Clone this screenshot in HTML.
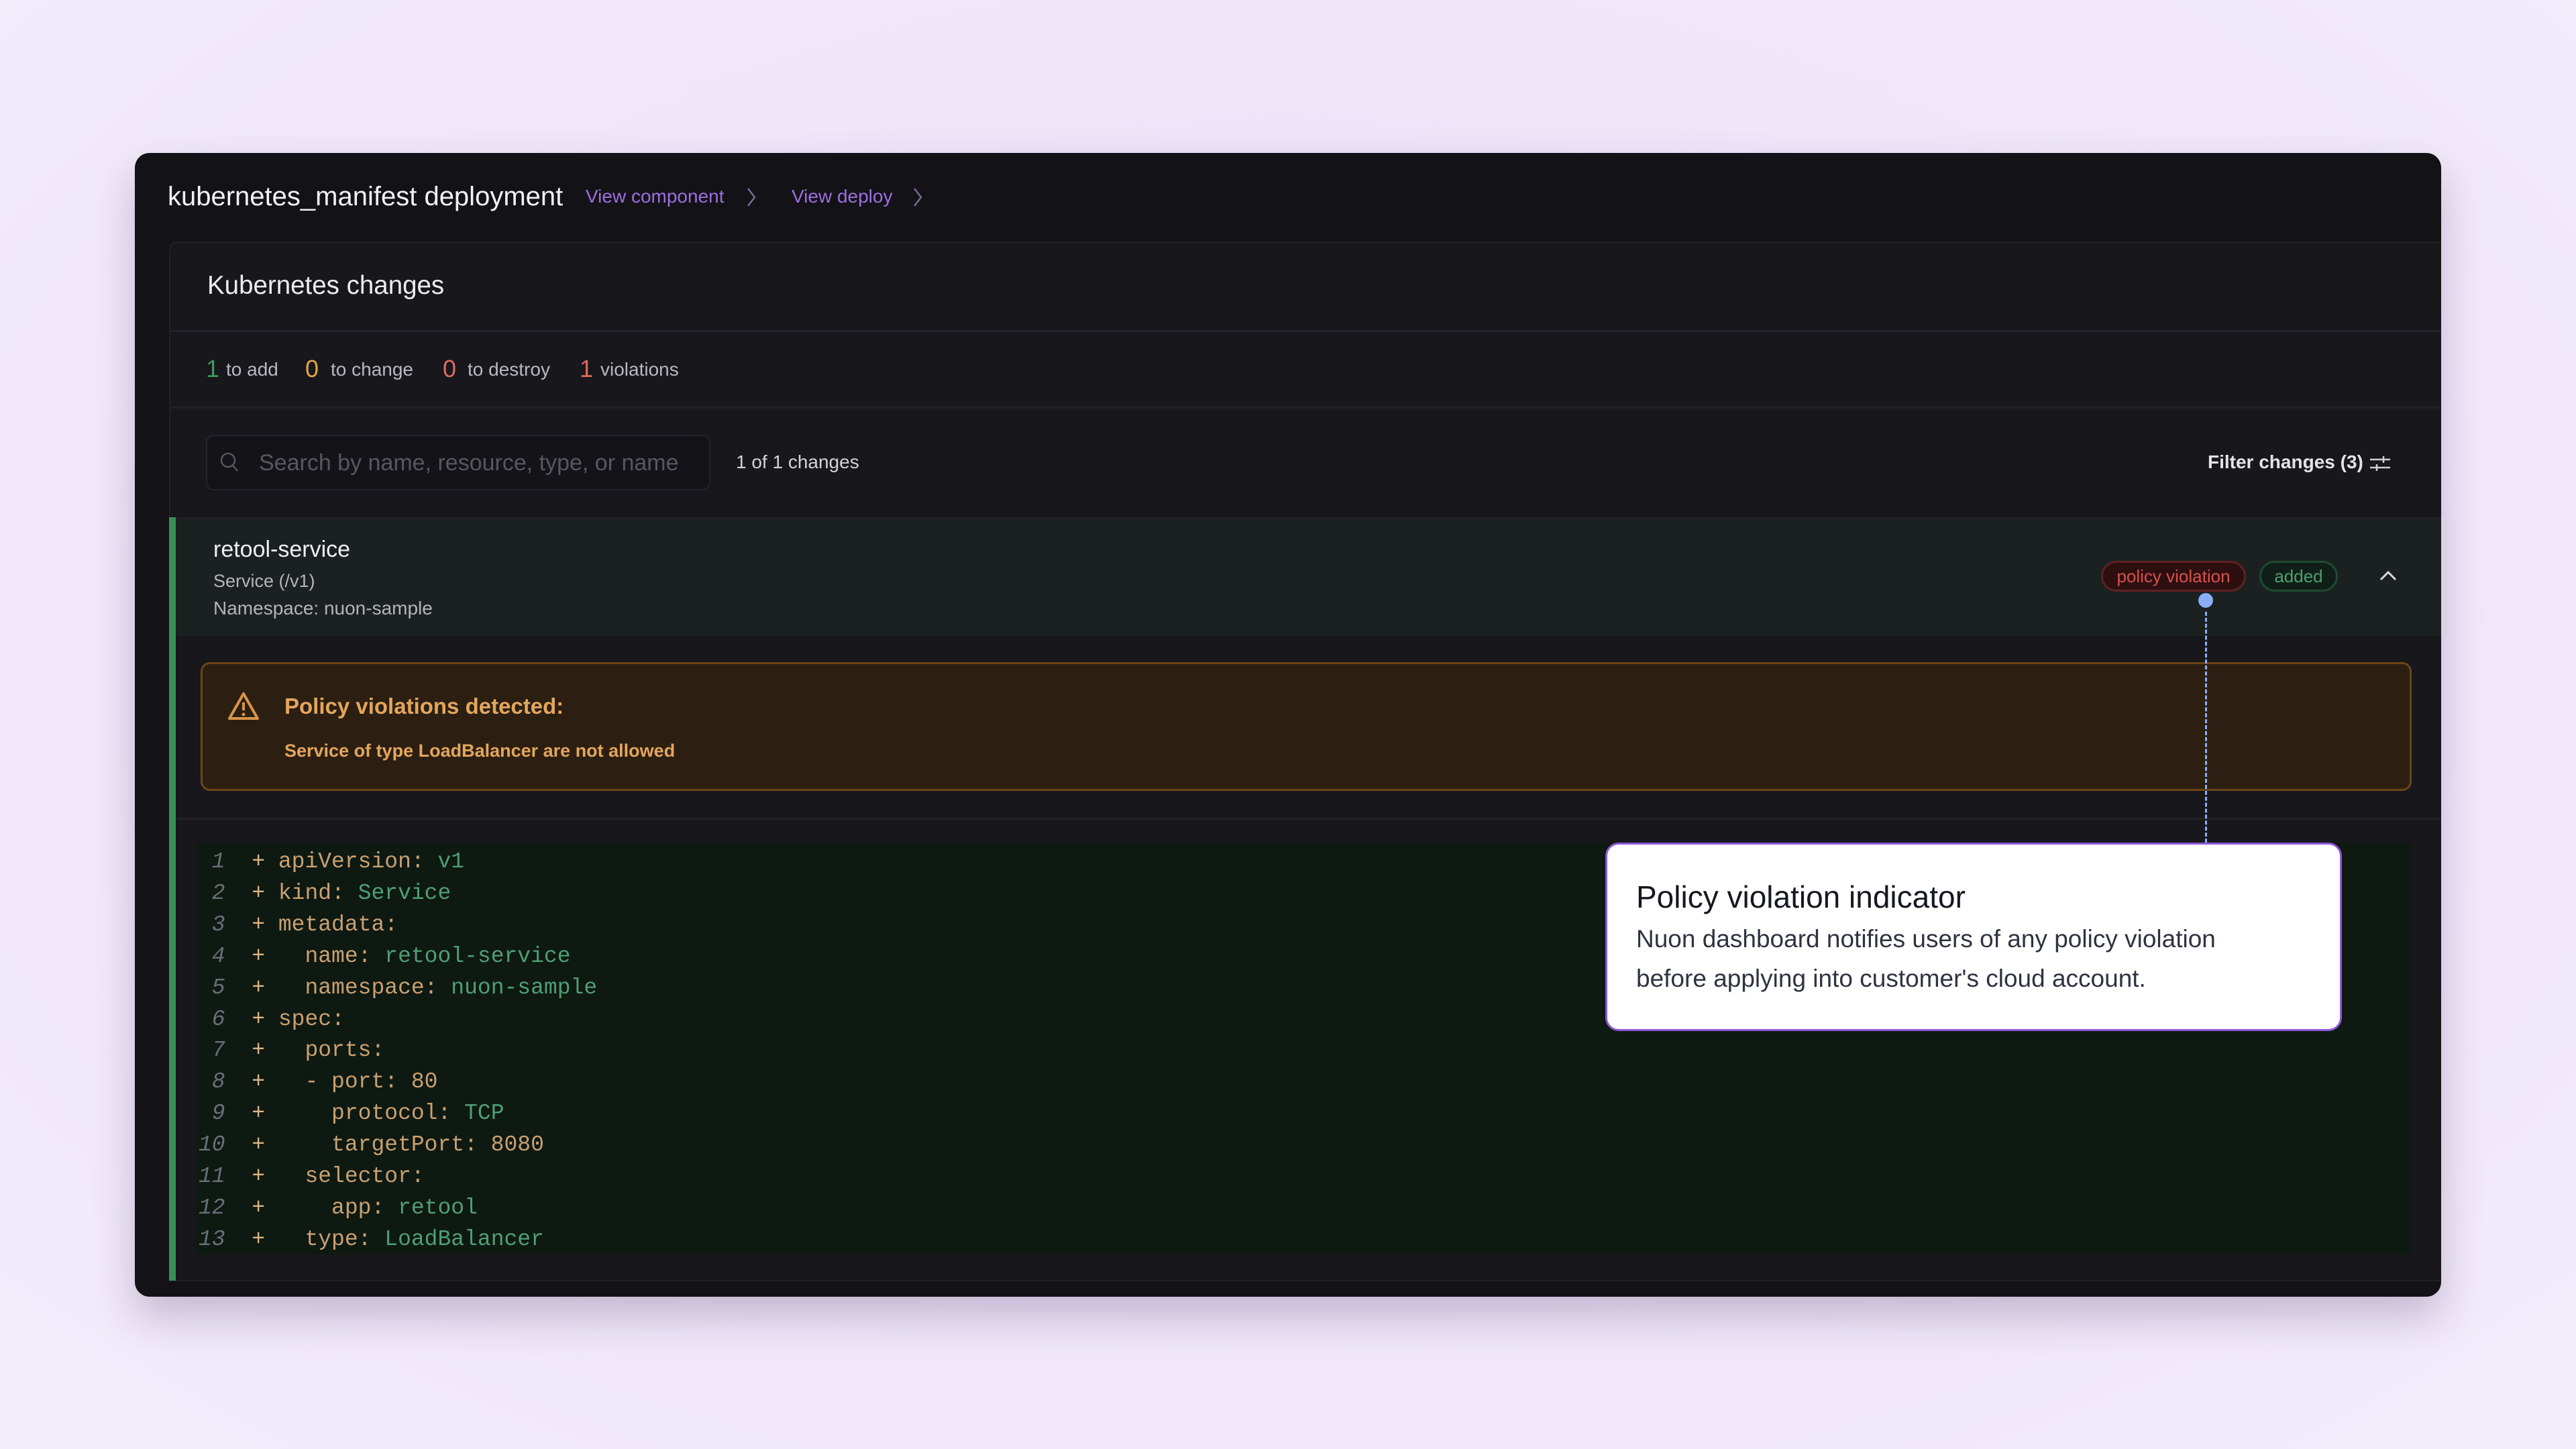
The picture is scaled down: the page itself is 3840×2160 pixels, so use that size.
<!DOCTYPE html>
<html><head><meta charset="utf-8"><style>
*{margin:0;padding:0;box-sizing:border-box}
body{width:3840px;height:2160px;overflow:hidden;background:radial-gradient(ellipse at 50% 45%,#e9dcf7 0%,#efe6f9 55%,#f2ecfa 100%);font-family:"Liberation Sans",sans-serif;position:relative}
.a{position:absolute;white-space:nowrap;line-height:1}
#panel{position:absolute;left:201px;top:228px;width:3438px;height:1705px;background:#131217;border-radius:22px;box-shadow:0 30px 60px rgba(60,40,90,.25);overflow:hidden}
.mono{font-family:"Liberation Mono",monospace}
</style></head><body>
<div id="panel"></div>
<!-- header -->
<div class="a" style="left:250px;top:273px;font-size:40px;color:#f2f2f4">kubernetes_manifest deployment</div>
<div class="a" style="left:873px;top:279px;font-size:28px;color:#9d6fe0">View component</div>
<svg class="a" style="left:1112px;top:278px" width="16" height="32" viewBox="0 0 16 32"><path d="M3 3 L13 16 L3 29" fill="none" stroke="#7a6a95" stroke-width="2.5"/></svg>
<div class="a" style="left:1180px;top:279px;font-size:28px;color:#9d6fe0">View deploy</div>
<svg class="a" style="left:1360px;top:278px" width="16" height="32" viewBox="0 0 16 32"><path d="M3 3 L13 16 L3 29" fill="none" stroke="#7a6a95" stroke-width="2.5"/></svg>
<!-- inner card -->
<div class="a" style="left:252px;top:360px;width:3387px;height:1550px;background:#18171c;border:2px solid #222127;border-right:none;border-radius:12px 0 0 0"></div>
<div class="a" style="left:309px;top:407px;font-size:38.5px;color:#ededf0">Kubernetes changes</div>
<div class="a" style="left:254px;top:492px;width:3385px;height:3px;background:#222127"></div>
<div class="a" style="left:307px;top:532px;font-size:36px;color:#3f9a5e">1</div>
<div class="a" style="left:337px;top:537px;font-size:28px;color:#b8b8be">to add</div>
<div class="a" style="left:455px;top:532px;font-size:36px;color:#e5a54a">0</div>
<div class="a" style="left:493px;top:537px;font-size:28px;color:#b8b8be">to change</div>
<div class="a" style="left:660px;top:532px;font-size:36px;color:#e06a62">0</div>
<div class="a" style="left:697px;top:537px;font-size:28px;color:#b8b8be">to destroy</div>
<div class="a" style="left:864px;top:532px;font-size:36px;color:#e06a62">1</div>
<div class="a" style="left:895px;top:537px;font-size:28px;color:#b8b8be">violations</div>
<div class="a" style="left:254px;top:606px;width:3385px;height:3px;background:#222127"></div>
<!-- search -->
<div class="a" style="left:307px;top:648px;width:752px;height:83px;background:#141318;border:2px solid #25242b;border-radius:12px"></div>
<svg class="a" style="left:326px;top:672px" width="32" height="34" viewBox="0 0 32 34"><circle cx="14" cy="14" r="10" fill="none" stroke="#55555e" stroke-width="2.5"/><path d="M21 22 L28 30" stroke="#55555e" stroke-width="2.5"/></svg>
<div class="a" style="left:386px;top:673px;font-size:34px;color:#575760">Search by name, resource, type, or name</div>
<div class="a" style="left:1097px;top:675px;font-size:28px;color:#d4d4d8">1 of 1 changes</div>
<div class="a" style="left:3291px;top:675px;font-size:28px;color:#e4e4e8;font-weight:bold">Filter changes (3)</div>
<svg class="a" style="left:3531px;top:676px" width="34" height="30" viewBox="0 0 34 30"><path d="M2 9 H32 M2 21 H32" stroke="#cfcfd4" stroke-width="2.5"/><path d="M22 4 V14 M12 16 V26" stroke="#cfcfd4" stroke-width="2.5"/></svg>
<!-- resource row -->
<div class="a" style="left:254px;top:771px;width:3385px;height:177px;background:#1b2120;border-top:3px solid #222127"></div>
<div class="a" style="left:252px;top:771px;width:10px;height:1138px;background:#3a8e55"></div>
<div class="a" style="left:318px;top:802px;font-size:34px;color:#f0f0f2">retool-service</div>
<div class="a" style="left:318px;top:853px;font-size:27px;color:#b4b4ba">Service (/v1)</div>
<div class="a" style="left:318px;top:893px;font-size:28px;color:#b4b4ba">Namespace: nuon-sample</div>
<div class="a" style="left:3132px;top:836px;width:216px;height:46px;border-radius:23px;background:#2d0f10;border:3px solid #5e2224;color:#d9514c;font-size:26px;text-align:center;line-height:40px">policy violation</div>
<div class="a" style="left:3368px;top:836px;width:117px;height:46px;border-radius:23px;background:#0f1f17;border:3px solid #1f4a31;color:#4f9e6e;font-size:26px;text-align:center;line-height:40px">added</div>
<svg class="a" style="left:3545px;top:848px" width="30" height="20" viewBox="0 0 30 20"><path d="M4 16 L15 5 L26 16" fill="none" stroke="#d8d8dc" stroke-width="3"/></svg>
<!-- warning -->
<div class="a" style="left:299px;top:987px;width:3296px;height:192px;background:#2c1f12;border:3px solid #6d4518;border-radius:14px"></div>
<svg class="a" style="left:338px;top:1030px" width="50" height="46" viewBox="0 0 50 46"><path d="M25 4 L46 41 H4 Z" fill="none" stroke="#d8944a" stroke-width="4" stroke-linejoin="round"/><path d="M25 17 V29" stroke="#d8944a" stroke-width="4"/><circle cx="25" cy="35" r="2.5" fill="#d8944a"/></svg>
<div class="a" style="left:424px;top:1036px;font-size:33px;color:#e3a65d;font-weight:bold">Policy violations detected:</div>
<div class="a" style="left:424px;top:1106px;font-size:27px;color:#e3a65d;font-weight:bold">Service of type LoadBalancer are not allowed</div>
<div class="a" style="left:262px;top:1219px;width:3377px;height:3px;background:#222127"></div>
<!-- code -->
<div class="a" style="left:292px;top:1256px;width:3303px;height:614px;background:#0e1912"></div>
<div class="a mono" style="left:296px;top:1262px;font-size:33px;line-height:46.9px;white-space:pre;color:#c9a070"><span style="color:#6a6f77;font-style:italic"> 1</span>  <span style="color:#dcb484">+</span> apiVersion: <span style="color:#4f9e74">v1</span>
<span style="color:#6a6f77;font-style:italic"> 2</span>  <span style="color:#dcb484">+</span> kind: <span style="color:#4f9e74">Service</span>
<span style="color:#6a6f77;font-style:italic"> 3</span>  <span style="color:#dcb484">+</span> metadata:
<span style="color:#6a6f77;font-style:italic"> 4</span>  <span style="color:#dcb484">+</span>   name: <span style="color:#4f9e74">retool-service</span>
<span style="color:#6a6f77;font-style:italic"> 5</span>  <span style="color:#dcb484">+</span>   namespace: <span style="color:#4f9e74">nuon-sample</span>
<span style="color:#6a6f77;font-style:italic"> 6</span>  <span style="color:#dcb484">+</span> spec:
<span style="color:#6a6f77;font-style:italic"> 7</span>  <span style="color:#dcb484">+</span>   ports:
<span style="color:#6a6f77;font-style:italic"> 8</span>  <span style="color:#dcb484">+</span>   - port: 80
<span style="color:#6a6f77;font-style:italic"> 9</span>  <span style="color:#dcb484">+</span>     protocol: <span style="color:#4f9e74">TCP</span>
<span style="color:#6a6f77;font-style:italic">10</span>  <span style="color:#dcb484">+</span>     targetPort: 8080
<span style="color:#6a6f77;font-style:italic">11</span>  <span style="color:#dcb484">+</span>   selector:
<span style="color:#6a6f77;font-style:italic">12</span>  <span style="color:#dcb484">+</span>     app: <span style="color:#4f9e74">retool</span>
<span style="color:#6a6f77;font-style:italic">13</span>  <span style="color:#dcb484">+</span>   type: <span style="color:#4f9e74">LoadBalancer</span></div>
<!-- indicator -->
<div class="a" style="left:3277px;top:884px;width:22px;height:22px;border-radius:50%;background:#8aaef8"></div>
<div class="a" style="left:3287px;top:912px;width:0;height:344px;border-left:3px dashed #8aaef8"></div>
<div class="a" style="left:2393px;top:1256px;width:1098px;height:281px;background:#fff;border:3px solid #8e58d6;border-radius:20px"></div>
<div class="a" style="left:2439px;top:1314px;font-size:46px;color:#151820">Policy violation indicator</div>
<div class="a" style="left:2439px;top:1370px;font-size:37px;line-height:59px;color:#2e3340;white-space:normal;width:1040px">Nuon dashboard notifies users of any policy violation<br>before applying into customer's cloud account.</div>
</body></html>
